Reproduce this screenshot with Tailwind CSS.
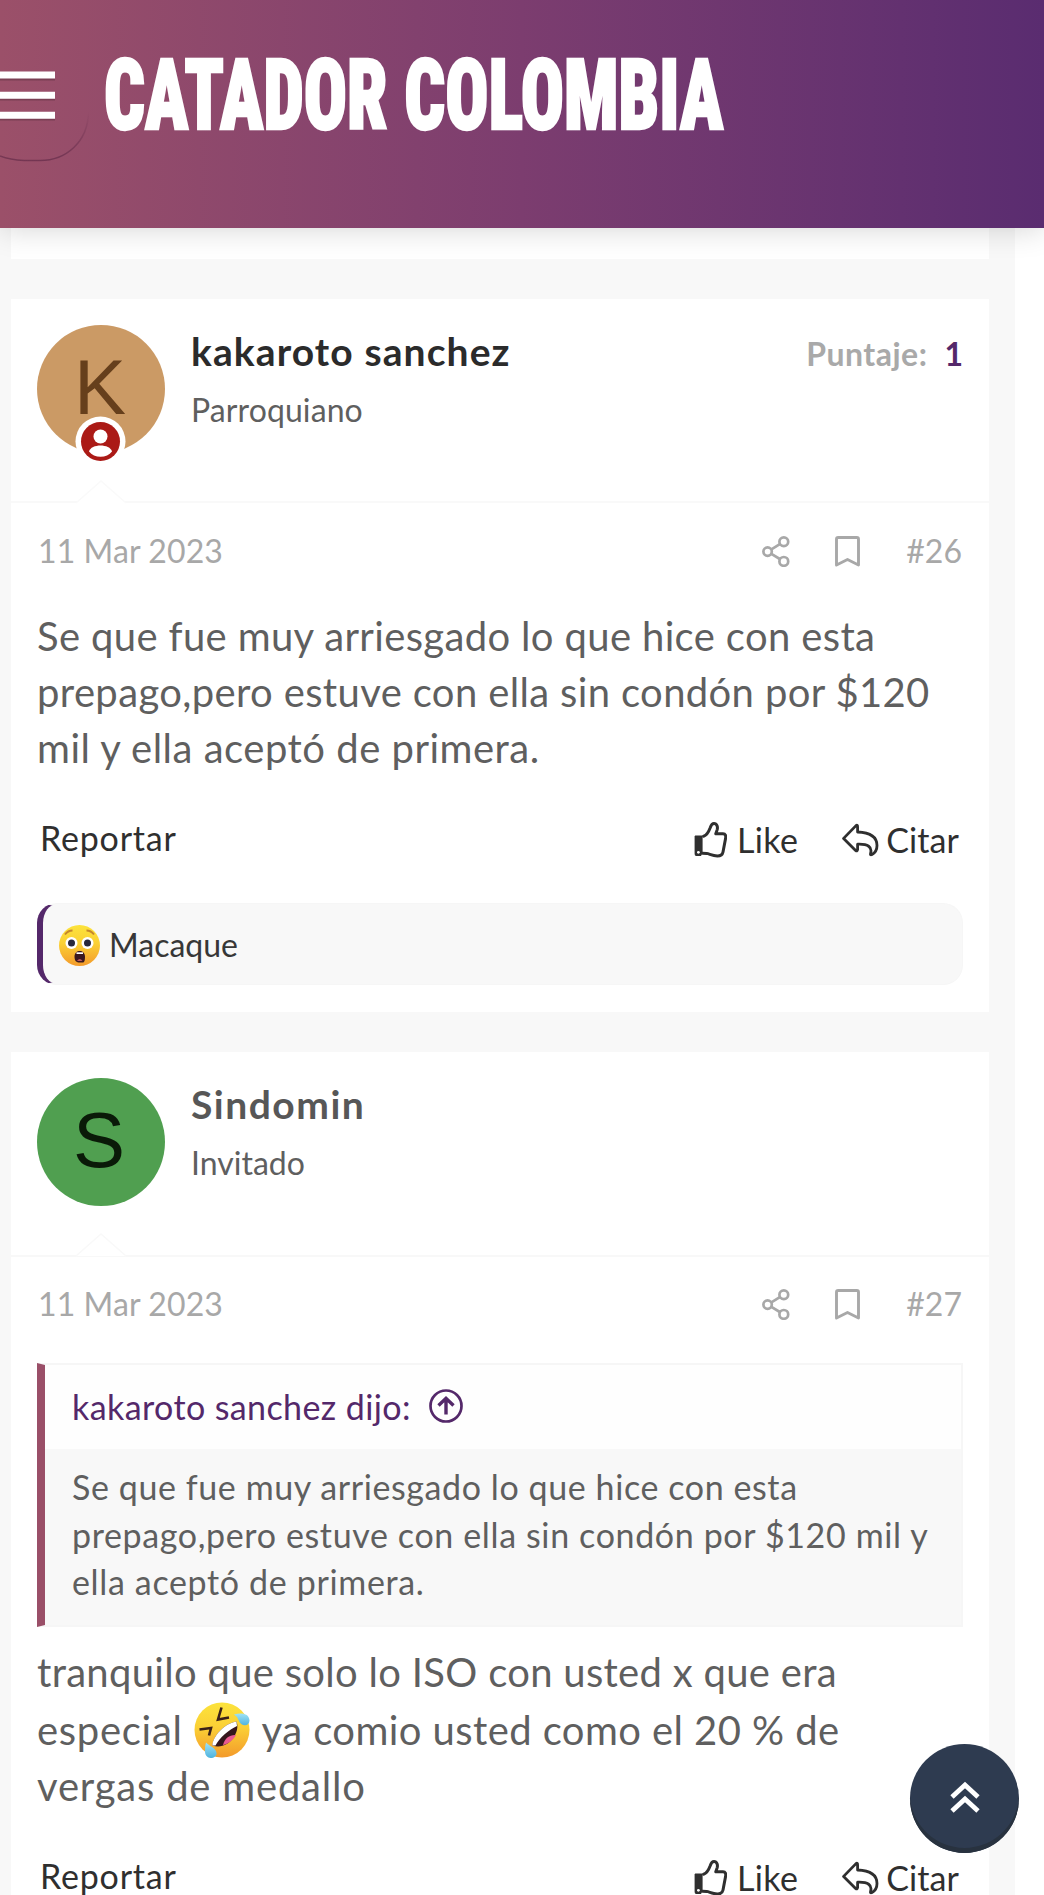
<!DOCTYPE html>
<html lang="es">
<head>
<meta charset="utf-8">
<title>Catador Colombia</title>
<script src="https://cdn.jsdelivr.net/npm/@tailwindcss/browser@4"></script>
</head>
<body class="bg-white font-['Lato',sans-serif] text-[#5f5f5f]">
<svg class="absolute size-0">
  <defs>
    <linearGradient id="face" x1="0" y1="0" x2="0" y2="1"><stop offset="0" stop-color="#fce33c"/><stop offset=".45" stop-color="#fbd035"/><stop offset="1" stop-color="#f39a2b"/></linearGradient>
    <linearGradient id="tear" x1="0" y1="0" x2="0" y2="1"><stop offset="0" stop-color="#9fe2f5"/><stop offset="1" stop-color="#4fb3de"/></linearGradient>
    <linearGradient id="edge" x1="0" y1="0" x2="0" y2="1"><stop offset="0" stop-color="#3c1030" stop-opacity="0"/><stop offset="1" stop-color="#3c1030" stop-opacity=".4"/></linearGradient>
  </defs>
  <symbol id="share" viewBox="0 0 28 31"><g fill="none" stroke="currentColor" stroke-width="2.7"><circle cx="5.6" cy="15.6" r="4.2"/><circle cx="21.8" cy="5.8" r="4.4"/><circle cx="21.8" cy="25.4" r="4.4"/><path d="M9.4 13.3 17.8 8.2M9.4 17.9 17.8 23"/></g></symbol>
  <symbol id="bookmark" viewBox="0 0 25 31"><path d="M1.5 29V3.2Q1.5 1.5 3.2 1.5H21.8Q23.5 1.5 23.5 3.2V29L12.5 23.500Z" fill="none" stroke="currentColor" stroke-width="2.9" stroke-linejoin="round"/></symbol>
  <symbol id="thumb" viewBox="0 0 33 36"><path d="M1.2 13.4H8.6V31L7 34H2.2Q.6 34 .6 32V14.4Z" fill="currentColor"/><circle cx="4.4" cy="30.3" r="1.4" fill="#fff"/><path d="M9.6 14.2C13 13.4 14.8 9.6 16.2 5.8C17 3.4 17.8 1.6 20 1.6C23 1.6 23.9 5 23.2 7.6L21.8 11.8H29C31.6 11.8 32 14 31.6 16.4L29 30C28.4 33 26.4 34 23.4 34C18.6 33.8 15.6 32 12.6 31.4L8.4 31.2" fill="none" stroke="currentColor" stroke-width="3" stroke-linejoin="round" stroke-linecap="round"/></symbol>
  <symbol id="reply" viewBox="0 0 37 34"><path d="M1.6 15.4 14 2.6Q15.6 1.4 15.6 4V9C26 9.4 35 12 35 22.6C35 26.6 33.6 29.6 30 31.6Q28 32.6 28.6 30.4C30.4 24 26 20.8 15.6 21.2V26.6Q15.2 28.8 13.6 27.4Z" fill="none" stroke="currentColor" stroke-width="2.8" stroke-linejoin="round"/></symbol>
</svg>

<div class="relative h-[1895px] w-[1044px] overflow-hidden">
  <header class="relative flex h-[228px] items-start bg-linear-to-r from-[#9b5069] via-[#7c3d6f] to-[#5a2c70] shadow-[0_2px_28px_rgba(0,0,0,0.16)]">
    <button class="relative h-[165px] w-[104px] shrink-0">
      <svg class="h-[165px] w-[92px]" viewBox="0 0 92 165">
        <path d="M88.500 112C88 142 66 160.500 40 160.500H24Q10 160 0 156" fill="none" stroke="url(#edge)" stroke-width="1.600"/>
        <path d="M0 77H55M0 97H55M0 117H55" stroke="#000" stroke-opacity=".2" stroke-width="7"/>
        <path d="M0 75H55M0 95.200H55M0 115.200H55" stroke="#fff" stroke-width="7"/>
      </svg>
    </button>
    <h1 class="mt-[33px] h-[124px] origin-left scale-x-[0.725] whitespace-nowrap font-['Roboto_Condensed','Roboto',sans-serif] text-[99px] leading-[124px] font-black text-white [-webkit-text-stroke:2.5px_white]">CATADOR COLOMBIA</h1>
  </header>

  <main class="flex w-[1015px] flex-col bg-[#f8f8f8] pr-[26px] pl-[11px]">
    <div class="h-[31px] bg-white"></div>

    <article class="mt-10 bg-white">
      <div class="relative flex h-[204px] gap-[26px] border-b-2 border-[#f9f9f9] px-[26px] pt-[26px]">
        <div class="relative flex size-32 shrink-0 items-center justify-center rounded-full bg-[#cb9a65] font-['Liberation_Sans',sans-serif] text-[78px] leading-none text-[#663f1c]"><span class="-mt-1 -ml-0.5">K</span>
          <svg class="absolute top-[91px] left-[38px] size-[51px]" viewBox="0 0 51 51"><circle cx="25.500" cy="25.500" r="25" fill="#fff"/><circle cx="25.500" cy="25.500" r="19.500" fill="#ab1a16"/><circle cx="25.500" cy="20.500" r="7" fill="#fff"/><path d="M14 35.500C16 27.500 35 27.500 37 35.500C32 42.500 19 42.500 14 35.500Z" fill="#fff"/></svg>
        </div>
        <div class="flex-1">
          <div class="text-[39px] leading-[52px] font-bold tracking-[1.1px] text-[#2b2b2b]">kakaroto sanchez</div>
          <div class="mt-[9px] text-[32px] leading-[48px] tracking-[0.1px]">Parroquiano</div>
        </div>
        <div class="flex h-[57px] items-center gap-[17px] text-[32px] font-bold"><span class="tracking-[0.5px] text-[#a9a9a9]">Puntaje:</span><span class="text-[#54286a]">1</span></div>
        <svg class="absolute top-[181px] left-[65px] h-6 w-[50px]" viewBox="0 0 50 24"><path d="M0 23 25 1 50 23" fill="#fff" stroke="#fafafa" stroke-width="1.500"/></svg>
      </div>
      <div class="flex h-24 items-center pr-[27px] pl-[27px] text-[32px] text-[#a8a8a8]">
        <span class="flex-1 tracking-[0.1px]">11 Mar 2023</span>
        <svg class="mr-[45px] h-[31px] w-7"><use href="#share"/></svg>
        <svg class="mr-[46px] h-[31px] w-[25px]"><use href="#bookmark"/></svg>
        <span>#26</span>
      </div>
      <div class="px-[26px] pt-[9px] text-[40px] leading-[56px] whitespace-nowrap">
        <p class="tracking-[0.36px]">Se que fue muy arriesgado lo que hice con esta</p>
        <p class="tracking-[0.36px]">prepago,pero estuve con ella sin condón por $120</p>
        <p class="tracking-[0.5px]">mil y ella aceptó de primera.</p>
      </div>
      <div class="flex h-[127px] items-center pr-[30px] pl-[29px] text-[34px] text-[#2f2f2f]">
        <span class="flex-1 pb-1 tracking-[0.8px]">Reportar</span>
        <svg class="mr-[10px] h-9 w-[33px]"><use href="#thumb"/></svg><span class="mr-[44px] tracking-[0.3px]">Like</span>
        <svg class="mr-[7px] h-[34px] w-[37px]"><use href="#reply"/></svg><span class="tracking-[0.1px]">Citar</span>
      </div>
      <div class="px-[26px] pb-[27px]">
        <div class="flex h-[82px] items-center gap-[9px] rounded-[20px] border border-l-[6px] border-[#f6f6f6] border-l-[#54286a] bg-[#f8f8f8] pl-4">
          <svg class="mt-0.5 size-[41px]" viewBox="0 0 41 41"><circle cx="20.500" cy="20.500" r="20.500" fill="url(#face)"/><path d="M6 9.500Q9 5.500 13.500 5.500M27.500 5.500Q32 5.500 35 9.500" fill="none" stroke="#c5862b" stroke-width="2"/><circle cx="12.500" cy="18" r="6" fill="#fff"/><circle cx="28.500" cy="18" r="6" fill="#fff"/><circle cx="12.500" cy="18" r="3.500" fill="#28273b"/><circle cx="28.500" cy="18" r="3.500" fill="#28273b"/><path d="M15.500 31.500C15.500 24 26 24 26 31.500S24 37.500 20.700 37.500 15.500 36 15.500 31.500Z" fill="#3a1820"/><path d="M17.500 27.300H24V29H17.500Z" fill="#fff"/><path d="M18 36Q20.700 32 23.500 36Z" fill="#bd5a62"/></svg>
          <span class="mt-0.5 text-[32px] text-[#373737]">Macaque</span>
        </div>
      </div>
    </article>

    <article class="mt-10 bg-white">
      <div class="relative flex h-[205px] gap-[26px] border-b-2 border-[#f8f8f8] px-[26px] pt-[26px]">
        <div class="flex size-32 shrink-0 items-center justify-center rounded-full bg-[#509f50] font-['Liberation_Sans',sans-serif] text-[78px] leading-none text-[#0a1a08]"><span class="-mt-1 -ml-1">S</span></div>
        <div class="flex-1">
          <div class="text-[39px] leading-[52px] font-bold tracking-[1.5px] text-[#575757]">Sindomin</div>
          <div class="mt-[9px] text-[32px] leading-[48px]">Invitado</div>
        </div>
        <svg class="absolute top-[181px] left-[65px] h-6 w-[50px]" viewBox="0 0 50 24"><path d="M0 23 25 1 50 23" fill="#fff" stroke="#f9f9f9" stroke-width="1.500"/></svg>
      </div>
      <div class="flex h-[94px] items-center pr-[27px] pl-[27px] text-[32px] text-[#a8a8a8]">
        <span class="flex-1 tracking-[0.1px]">11 Mar 2023</span>
        <svg class="mr-[45px] h-[31px] w-7"><use href="#share"/></svg>
        <svg class="mr-[46px] h-[31px] w-[25px]"><use href="#bookmark"/></svg>
        <span>#27</span>
      </div>
      <div class="px-[26px] pt-3 whitespace-nowrap">
        <blockquote class="h-[264px] border-2 border-l-8 border-[#f6f6f6] border-l-[#9a4f68] bg-[#f8f8f8] text-[34px]">
          <div class="flex h-[84px] items-center gap-[18px] bg-[#fefefe] pl-[27px] text-[#54286a]">
            <span class="-mt-0.5 tracking-[0.4px]">kakaroto sanchez dijo:</span>
            <svg class="-mt-0.5 size-[34px]" viewBox="0 0 34 34" fill="none" stroke="currentColor"><circle cx="17" cy="17" r="15.500" stroke-width="2.700"/><path d="M17 25.500V10M9.500 16.500 17 9.300 24.500 16.500" stroke-width="3.400"/></svg>
          </div>
          <div class="pt-[14px] pl-[27px] leading-[47.700px]">
            <p class="tracking-[0.59px]">Se que fue muy arriesgado lo que hice con esta</p>
            <p class="tracking-[0.63px]">prepago,pero estuve con ella sin condón por $120 mil y</p>
            <p class="tracking-[0.65px]">ella aceptó de primera.</p>
          </div>
        </blockquote>
        <div class="pt-[17px] text-[40px] leading-[56px]">
          <p class="tracking-[0.3px]">tranquilo que solo lo ISO con usted x que era</p>
          <p class="flex h-[59px] items-center"><span class="tracking-[0.7px]">especial</span>
            <svg class="mr-3 ml-[11px] size-[56px]" viewBox="0 0 56 56"><circle cx="28" cy="28" r="27.500" fill="url(#face)"/><path d="M27.500 5.500 24 17.500 35 15.500M5.500 27.500 17 26 15 33.500" fill="none" stroke="#3a2018" stroke-width="2.600"/><path d="M18.500 43.500C18 36 30 21 42.500 19.500C47 31 33 49 18.500 43.500Z" fill="#35161c"/><path d="M18.500 43.500C18 36 30 21 42.500 19.500L43 24C36 27 25 36 21.500 43.500Z" fill="#fff"/><path d="M29 43.200C30.500 36 36 32.500 42 33C39.500 38 34 42 29 43.200Z" fill="#ea5a90"/><path d="M40 12.500C48 10.500 55 11.500 55.500 18.500C55 25.500 46.500 24.500 44.500 18Q43.500 14.500 40 12.500Z" fill="url(#tear)"/><path d="M12 40.500C15.500 44.500 23.500 46 22.500 52.500C20 58 11.500 57 11 50Q10.800 44 12 40.500Z" fill="url(#tear)"/></svg>
            <span class="tracking-[0.42px]">ya comio usted como el 20 % de</span></p>
          <p class="-mt-px tracking-[0.8px]">vergas de medallo</p>
        </div>
      </div>
      <div class="flex h-[127px] items-center pr-[30px] pl-[29px] text-[34px] text-[#2f2f2f]">
        <span class="flex-1 pb-1 tracking-[0.8px]">Reportar</span>
        <svg class="mr-[10px] h-9 w-[33px]"><use href="#thumb"/></svg><span class="mr-[44px] tracking-[0.3px]">Like</span>
        <svg class="mr-[7px] h-[34px] w-[37px]"><use href="#reply"/></svg><span class="tracking-[0.1px]">Citar</span>
      </div>
    </article>
  </main>

  <button class="absolute top-[1744px] left-[910px] flex size-[109px] items-center justify-center rounded-full bg-[#2e3b50] pb-1 shadow-[inset_0_-5px_0_#28323f]">
    <svg class="h-8 w-[30px]" viewBox="0 0 30 32" fill="none" stroke="#fff" stroke-width="4.800"><path d="M2 16 15 4 28 16M2 30 15 18 28 30"/></svg>
  </button>
</div>
</body>
</html>
